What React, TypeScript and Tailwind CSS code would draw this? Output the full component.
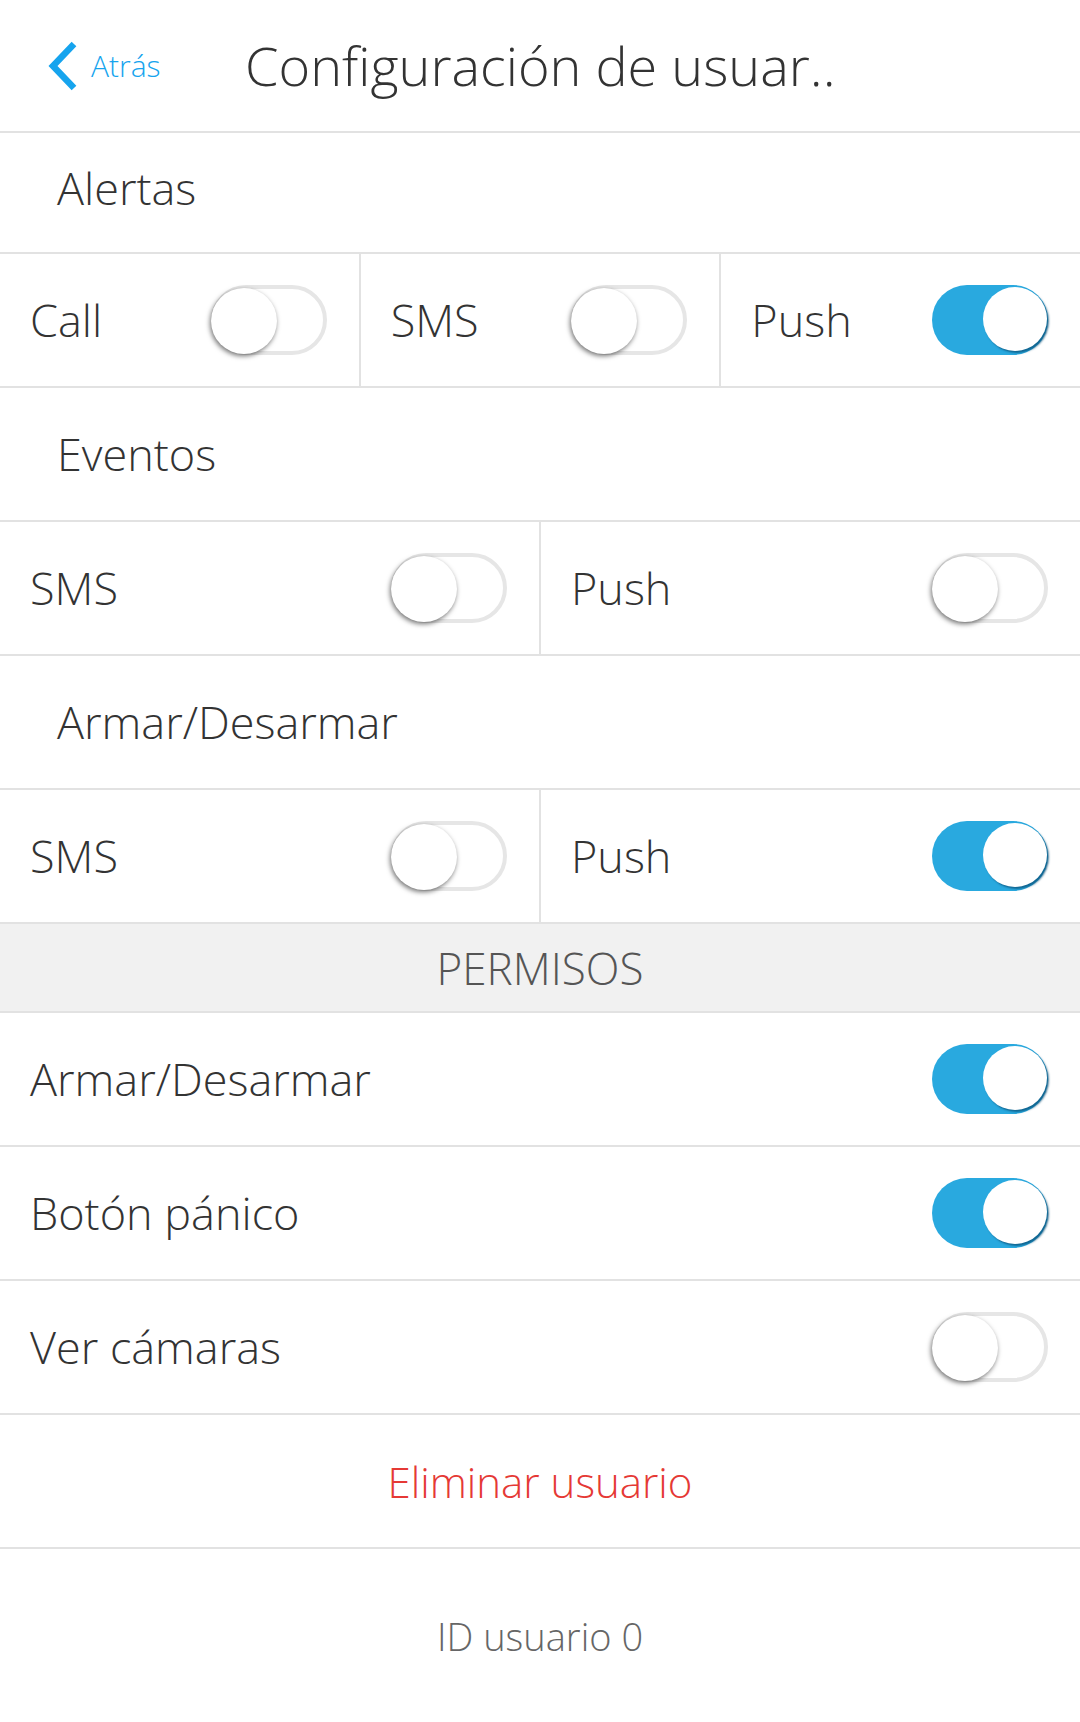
const font = { fontFamily: '"Open Sans", "Noto Sans", sans-serif' };

function Toggle({ on }: { on: boolean }) {
  if (on) {
    return (
      <div className="relative w-[116px] h-[70px] shrink-0 rounded-full bg-[#29a9df]">
        <div className="absolute right-[1px] top-[2px] w-[64px] h-[64px] rounded-full bg-white shadow-[2px_2px_2px_rgba(10,80,120,0.75)]" />
      </div>
    );
  }
  return (
    <div className="relative w-[116px] h-[70px] shrink-0 rounded-full bg-white border-[4px] border-[#e6e6e6]">
      <div className="absolute left-[-4px] top-[-1px] w-[66px] h-[66px] rounded-full bg-white shadow-[-1px_2px_5px_rgba(0,0,0,0.55)]" />
    </div>
  );
}

function Cell({ label, on, last }: { label: string; on: boolean; last?: boolean }) {
  return (
    <div
      className={`flex-1 flex items-center justify-between pl-[30px] pr-[32px] ${
        last ? "" : "border-r-2 border-[#e2e2e2]"
      }`}
    >
      <span className="text-[45px] text-[#333]">{label}</span>
      <Toggle on={on} />
    </div>
  );
}

function Section({ title }: { title: string }) {
  return (
    <div className="h-[134px] flex items-center pl-[57px] border-b-2 border-[#e2e2e2]">
      <span className="text-[45px] text-[#333]">{title}</span>
    </div>
  );
}

function ToggleRow({ cells }: { cells: { label: string; on: boolean }[] }) {
  return (
    <div className="h-[134px] flex border-b-2 border-[#e2e2e2]">
      {cells.map((c, i) => (
        <Cell key={i} label={c.label} on={c.on} last={i === cells.length - 1} />
      ))}
    </div>
  );
}

function PermRow({ label, on }: { label: string; on: boolean }) {
  return (
    <div className="h-[134px] flex items-center justify-between pl-[30px] pr-[32px] border-b-2 border-[#e2e2e2]">
      <span className="text-[45px] text-[#333]">{label}</span>
      <Toggle on={on} />
    </div>
  );
}

export default function App() {
  return (
    <div className="w-[1080px] h-[1722px] bg-white font-light" style={font}>
      {/* Header */}
      <div className="h-[133px] flex items-center border-b-2 border-[#e2e2e2]">
        <div className="flex items-center w-[245px] pl-[47px]">
          <svg width="32" height="50" viewBox="0 0 32 50" className="shrink-0">
            <polyline
              points="27,3 6,25 27,47"
              fill="none"
              stroke="#16a4ee"
              strokeWidth="6.5"
              strokeLinejoin="miter"
            />
          </svg>
          <span className="text-[30px] text-[#16a4ee] ml-[12px]">Atrás</span>
        </div>
        <span className="text-[54px] text-[#333]">Configuración de usuar..</span>
      </div>

      <div className="h-[121px] flex items-center pl-[57px] pb-[10px] border-b-2 border-[#e2e2e2]">
        <span className="text-[45px] text-[#333]">Alertas</span>
      </div>
      <ToggleRow
        cells={[
          { label: "Call", on: false },
          { label: "SMS", on: false },
          { label: "Push", on: true },
        ]}
      />

      <Section title="Eventos" />
      <ToggleRow
        cells={[
          { label: "SMS", on: false },
          { label: "Push", on: false },
        ]}
      />

      <Section title="Armar/Desarmar" />
      <ToggleRow
        cells={[
          { label: "SMS", on: false },
          { label: "Push", on: true },
        ]}
      />

      {/* Permisos */}
      <div className="h-[89px] flex items-center justify-center bg-[#f1f1f1] border-b-2 border-[#e2e2e2]">
        <span className="text-[44px] text-[#555]">PERMISOS</span>
      </div>
      <PermRow label="Armar/Desarmar" on={true} />
      <PermRow label="Botón pánico" on={true} />
      <PermRow label="Ver cámaras" on={false} />

      <div className="h-[134px] flex items-center justify-center border-b-2 border-[#e2e2e2]">
        <span className="text-[42px] text-[#e53935]">Eliminar usuario</span>
      </div>

      <div className="h-[174px] flex items-center justify-center">
        <span className="text-[38px] text-[#666]">ID usuario 0</span>
      </div>
    </div>
  );
}
